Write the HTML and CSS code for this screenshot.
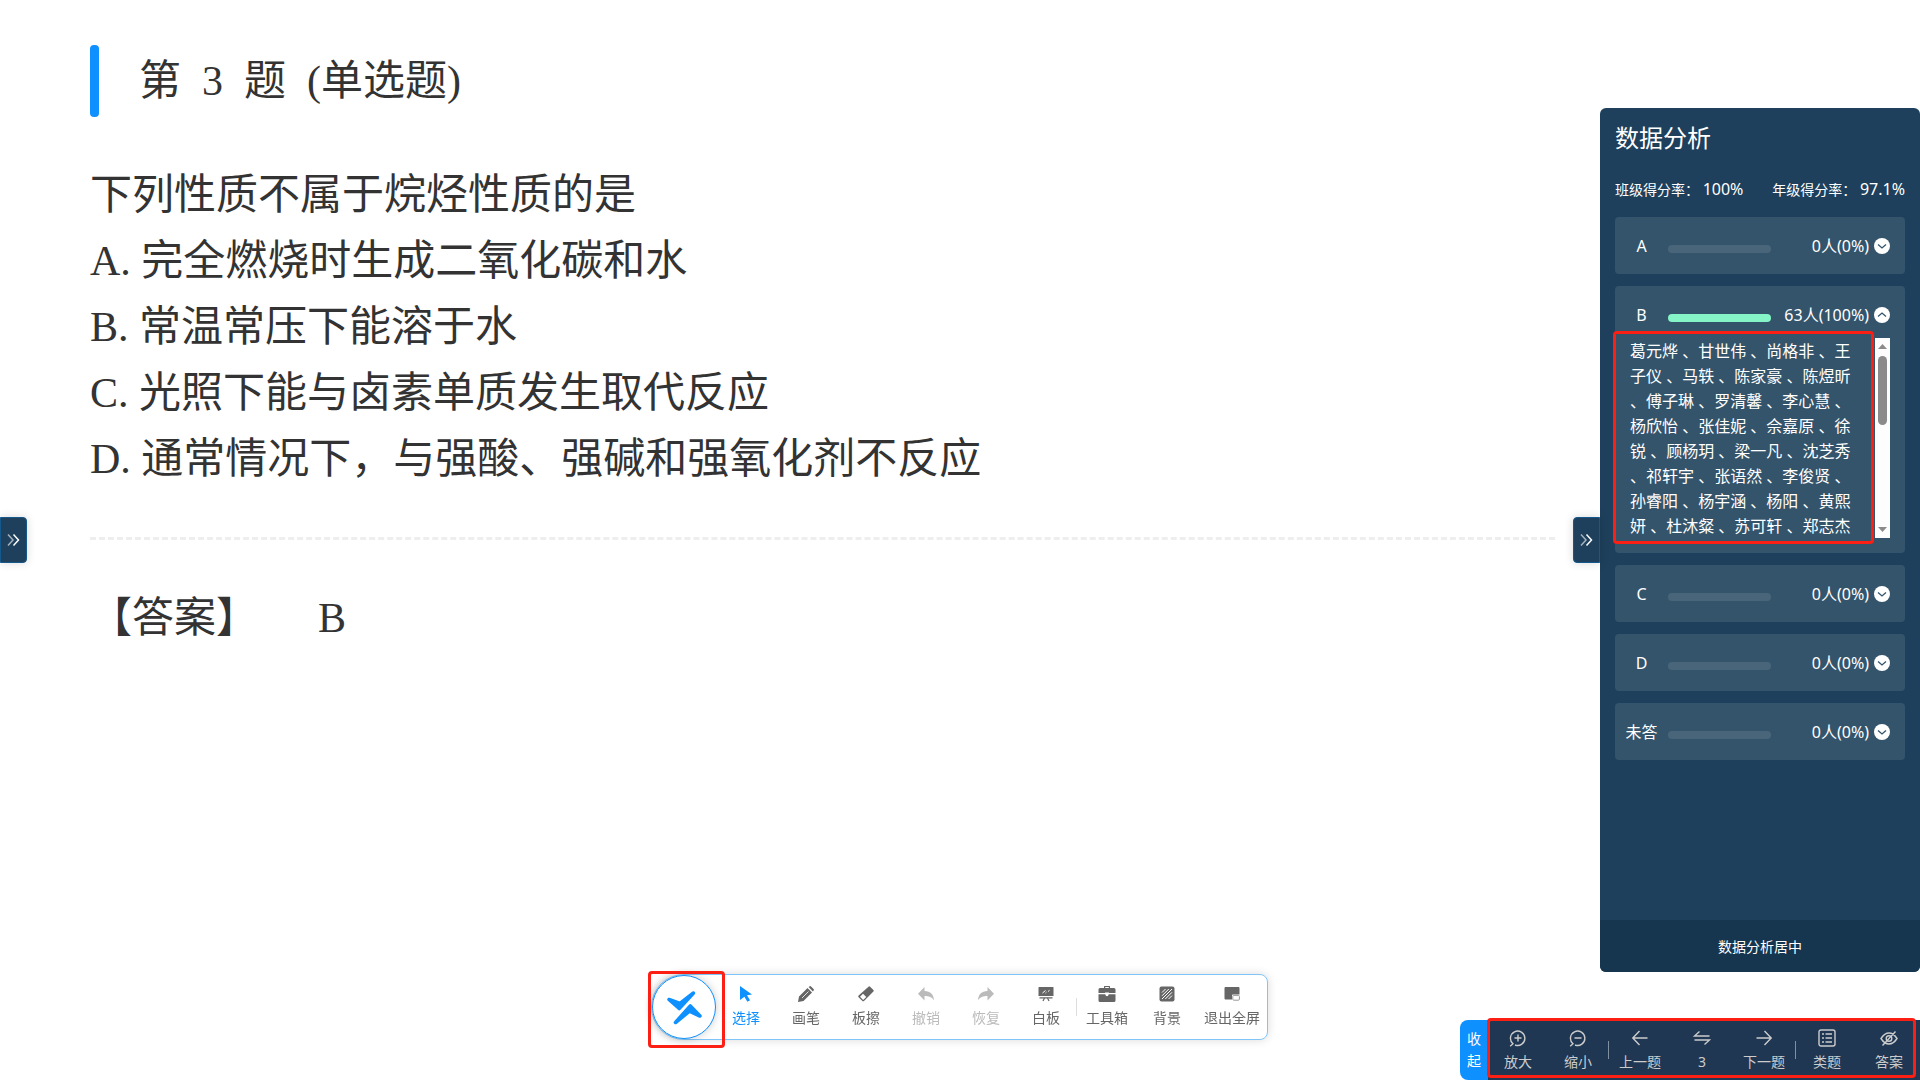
FILE: index.html
```html
<!DOCTYPE html>
<html lang="zh-CN">

<head>
    <meta charset="UTF-8">
    <meta name="viewport" content="width=device-width, initial-scale=1.0">
    <title>数据分析</title>
    <link rel="stylesheet" href="styles.css">
</head>

<body>
    <div class="page">
        <main class="question">
            <h1 class="title">第&nbsp; 3&nbsp; 题&nbsp; (单选题)</h1>
            <div class="stem">
                <p>下列性质不属于烷烃性质的是</p>
                <p>A. 完全燃烧时生成二氧化碳和水</p>
                <p>B. 常温常压下能溶于水</p>
                <p>C. 光照下能与卤素单质发生取代反应</p>
                <p>D. 通常情况下，与强酸、强碱和强氧化剂不反应</p>
            </div>
            <div class="answer">
                <span>【答案】</span>
                <span>B</span>
            </div>
        </main>

        <aside class="panel">
            <button class="toggle toggle-panel" aria-label="收起面板">
                <svg width="14" height="14" viewBox="0 0 14 14"><path class="dim" d="M2 1.500l5 5.500-5 5.500"/><path d="M7.500 1.500l5 5.500-5 5.500"/></svg>
            </button>
            <h2 class="panel-title">数据分析</h2>
            <div class="rates">
                <div>班级得分率： <b>100%</b></div>
                <div>年级得分率： <b>97.1%</b></div>
            </div>
            <div class="cards">
                <section class="card">
                    <div class="row">
                        <span class="name">A</span>
                        <span class="bar"></span>
                        <span class="count">0人(0%)</span>
                        <button class="fold" aria-label="展开"><svg width="16" height="16" viewBox="0 0 16 16"><circle cx="8" cy="8" r="8"/><path d="M4 6.500l4 3.500 4-3.500"/></svg></button>
                    </div>
                </section>
                <section class="card">
                    <div class="row">
                        <span class="name">B</span>
                        <span class="bar full"></span>
                        <span class="count">63人(100%)</span>
                        <button class="fold" aria-label="折叠"><svg width="16" height="16" viewBox="0 0 16 16"><circle cx="8" cy="8" r="8"/><path d="M4 9.500l4-3.500 4 3.500"/></svg></button>
                    </div>
                    <div class="detail">
                        <div class="students">
                            葛元烨 、甘世伟 、尚格非 、王<br>
                            子仪 、马轶 、陈家豪 、陈煜昕<br>
                            、傅子琳 、罗清馨 、李心慧 、<br>
                            杨欣怡 、张佳妮 、佘嘉原 、徐<br>
                            锐 、顾杨玥 、梁一凡 、沈芝秀<br>
                            、祁轩宇 、张语然 、李俊贤 、<br>
                            孙睿阳 、杨宇涵 、杨阳 、黄熙<br>
                            妍 、杜沐粲 、苏可轩 、郑志杰
                        </div>
                        <div class="scroll">
                            <svg width="9" height="5" viewBox="0 0 9 5"><path d="M0 5l4.500-5 4.500 5z"/></svg>
                            <div class="thumb"></div>
                            <svg width="9" height="5" viewBox="0 0 9 5"><path d="M0 0l4.500 5 4.500-5z"/></svg>
                        </div>
                        <div class="mark mark-students"></div>
                    </div>
                </section>
                <section class="card">
                    <div class="row">
                        <span class="name">C</span>
                        <span class="bar"></span>
                        <span class="count">0人(0%)</span>
                        <button class="fold" aria-label="展开"><svg width="16" height="16" viewBox="0 0 16 16"><circle cx="8" cy="8" r="8"/><path d="M4 6.500l4 3.500 4-3.500"/></svg></button>
                    </div>
                </section>
                <section class="card">
                    <div class="row">
                        <span class="name">D</span>
                        <span class="bar"></span>
                        <span class="count">0人(0%)</span>
                        <button class="fold" aria-label="展开"><svg width="16" height="16" viewBox="0 0 16 16"><circle cx="8" cy="8" r="8"/><path d="M4 6.500l4 3.500 4-3.500"/></svg></button>
                    </div>
                </section>
                <section class="card">
                    <div class="row">
                        <span class="name">未答</span>
                        <span class="bar"></span>
                        <span class="count">0人(0%)</span>
                        <button class="fold" aria-label="展开"><svg width="16" height="16" viewBox="0 0 16 16"><circle cx="8" cy="8" r="8"/><path d="M4 6.500l4 3.500 4-3.500"/></svg></button>
                    </div>
                </section>
            </div>
            <button class="center-btn">数据分析居中</button>
        </aside>
    </div>

    <button class="toggle toggle-left" aria-label="展开目录">
        <svg width="14" height="14" viewBox="0 0 14 14"><path class="dim" d="M2 1.500l5 5.500-5 5.500"/><path d="M7.500 1.500l5 5.500-5 5.500"/></svg>
    </button>

    <!-- drawing tools -->
    <nav class="tools">
        <button class="logo" aria-label="菜单">
            <svg width="36" height="36" viewBox="0 0 36 36">
                <path d="M3 10.500L13.200 19.500 27.500 4 14 14.500z"/>
                <path d="M34 27L24.300 17 9.500 33.500 23.500 22z"/>
            </svg>
        </button>
        <button class="tool active">
            <svg width="16" height="16" viewBox="0 0 16 16"><path d="M2 0l12 8.500-5 .8 3 5-2.600 1.500-3-5L2 14z"/></svg>
            选择
        </button>
        <button class="tool">
            <svg width="16" height="16" viewBox="0 0 16 16"><path d="M9.500 2l4.500 4.500L5.500 15 0 16l1-5.500zM10.600 1l.8-.6q.8-.7 1.600 0l2.600 2.600q.7.800 0 1.600l-.7.800z"/><path d="M4 12l6.500-6.500" stroke="#fff" stroke-width=".8"/></svg>
            画笔
        </button>
        <button class="tool">
            <svg width="16" height="16" viewBox="0 0 16 16"><path fill-rule="evenodd" d="M10.500.7q.8-.7 1.600 0l3.300 3.300q.7.800 0 1.600L6 14.900q-.8.700-1.600 0L.6 11.200q-.7-.8 0-1.600zM5 7.800l-3 3 3.100 3.100 3.200-3z"/></svg>
            板擦
        </button>
        <button class="tool" disabled>
            <svg width="16" height="16" viewBox="0 0 16 16"><path d="M6.500 1v4c6 0 9.200 3.500 9.500 9.500-2-3.500-5-4.500-9.500-4.500v4.500L0 7.800z"/></svg>
            撤销
        </button>
        <button class="tool" disabled>
            <svg width="16" height="16" viewBox="0 0 16 16"><path d="M9.500 1v4C3.500 5 .3 8.500 0 14.500c2-3.500 5-4.500 9.500-4.500v4.500L16 7.800z"/></svg>
            恢复
        </button>
        <button class="tool">
            <svg width="16" height="16" viewBox="0 0 16 16"><path d="M1 1h14q.5 0 .5.500v8.500H.5V1.500Q.5 1 1 1zM1.500 11.200h13v1.200h-13z"/><path d="M6.500 12l-1.500 3M9.500 12l1.500 3" stroke="#666" stroke-width="1.200"/><path d="M4.500 7l3-2.500M7.500 7l1-.9M10 5.500l1.500-1.200" stroke="#fff" stroke-width="1"/></svg>
            白板
        </button>
        <span class="line"></span>
        <button class="tool">
            <svg width="18" height="16" viewBox="0 0 18 16"><path fill-rule="evenodd" d="M6 2V.5Q6 0 6.500 0h5q.5 0 .5.500V2h4q1.500 0 1.500 1.500V7H11V6.500H7V7H.5V3.500Q.5 2 2 2zM7.200 1.100V2h3.600v-.9zM.5 8.200H7.300q.3 2 1.700 2t1.700-2h6.800V14.500q0 1.500-1.500 1.500H2q-1.500 0-1.500-1.500z"/></svg>
            工具箱
        </button>
        <button class="tool">
            <svg width="16" height="16" viewBox="0 0 16 16"><rect x=".5" y=".5" width="15" height="15" rx="2"/><path d="M3 6.500L6.500 3M3 9.800L9.800 3M3 13L13 3M6.300 13L13 6.300M9.600 13L13 9.600" stroke="#fff" stroke-width="1"/></svg>
            背景
        </button>
        <button class="tool wide">
            <svg width="16" height="16" viewBox="0 0 16 16"><path d="M1.500 1h13q1 0 1 1v6.500H9q-1 0-1 1v4H1.500q-1 0-1-1V2q0-1 1-1z"/><rect x="8.800" y="9.400" width="6.600" height="4.800" rx="1" fill="#fff" stroke="#999"/></svg>
            退出全屏
        </button>
        <div class="mark mark-logo"></div>
    </nav>

    <!-- question navigation -->
    <nav class="pager">
        <button class="collapse">收<br>起</button>
        <div class="pager-bar">
            <button class="step">
                <svg width="18" height="18" viewBox="0 0 18 18"><path d="M4 14.800a7.200 7.200 0 1 1 2 1.200M4.500 14.300L1.200 17.200M5.500 9h7M9 5.500v7"/></svg>
                放大
            </button>
            <button class="step">
                <svg width="18" height="18" viewBox="0 0 18 18"><path d="M4 14.800a7.200 7.200 0 1 1 2 1.200M4.500 14.300L1.200 17.200M5.500 9h7"/></svg>
                缩小
            </button>
            <span class="line"></span>
            <button class="step">
                <svg width="18" height="18" viewBox="0 0 18 18"><path d="M16.500 9h-14M8.500 2L1.800 9l6.700 7"/></svg>
                上一题
            </button>
            <button class="step">
                <svg width="18" height="18" viewBox="0 0 18 18"><path d="M6.500 2.500L1.500 7h15M11.500 15.500l5-4.500h-15"/></svg>
                3
            </button>
            <button class="step">
                <svg width="18" height="18" viewBox="0 0 18 18"><path d="M1.500 9h14M9.500 2l6.700 7-6.700 7"/></svg>
                下一题
            </button>
            <span class="line"></span>
            <button class="step">
                <svg width="18" height="18" viewBox="0 0 18 18"><rect x="1" y="1" width="16" height="16" rx="2"/><path d="M4 5h2M7.500 5H14M4 9h2M7.500 9H14M4 13h2M7.500 13H14"/></svg>
                类题
            </button>
            <button class="step">
                <svg width="18" height="18" viewBox="0 0 18 18"><path d="M1 9.500Q4.500 4 9 4t8 5.500Q13.500 15 9 15T1 9.500zM15.500 2.500L2.500 16.500"/><circle cx="9" cy="9.500" r="2.800"/></svg>
                答案
            </button>
        </div>
        <div class="mark mark-pager"></div>
    </nav>
</body>

</html>
```

FILE: styles.css
```css
* {
    box-sizing: border-box;
}
body {
    margin: 0;
    background-color: #fff;
    font-family: "Noto Sans", "Noto Sans CJK SC", sans-serif;
}
h1, h2, p {
    margin: 0;
    font-weight: normal;
}
button {
    border: none;
    padding: 0;
    background: none;
    font-family: inherit;
    color: inherit;
    cursor: pointer;
}
svg {
    display: block;
}
.page {
    display: flex;
    align-items: flex-start;
    min-height: 100vh;
}

/* question */
.question {
    flex: 1;
    padding: 45px 45px 0 90px;
    font-family: "Liberation Serif", "Noto Sans CJK SC", serif;
    font-size: 42px;
    line-height: 66px;
    color: #333;
}
.title {
    display: flex;
    align-items: center;
    gap: 40px;
    height: 72px;
    font-size: 42px;
}
.title::before {
    content: "";
    width: 9px;
    height: 72px;
    border-radius: 4px;
    background-color: #0e90ff;
}
.stem {
    padding: 45px 0;
    border-bottom: 3px dashed #eee;
}
.answer {
    display: flex;
    gap: 60px;
    padding-top: 45px;
}

/* analysis panel */
.panel {
    position: relative;
    display: flex;
    flex-direction: column;
    width: 320px;
    height: 80vh;
    margin-top: 10vh;
    border-radius: 6px;
    background-color: #1e405c;
    color: #fff;
}
.panel-title {
    padding: 12px 15px;
    font-size: 24px;
    line-height: 36px;
}
.rates {
    display: flex;
    justify-content: space-between;
    align-items: center;
    padding: 9px 15px 10px;
    font-size: 14px;
    line-height: 24px;
}
.rates b {
    font-size: 16px;
    font-weight: normal;
}
.cards {
    flex: 1;
    display: flex;
    flex-direction: column;
    gap: 12px;
    padding: 5px 15px;
}
.card {
    border-radius: 4px;
    background-color: #34546c;
}
.row {
    display: flex;
    align-items: center;
    height: 57px;
    padding-right: 15px;
    font-size: 16px;
    line-height: 24px;
}
.name {
    width: 53px;
    text-align: center;
}
.bar {
    width: 103px;
    height: 8px;
    margin-top: 6px;
    border-radius: 4px;
    background-color: #49657a;
}
.bar.full {
    background-color: #85f4c6;
}
.count {
    flex: 1;
    text-align: right;
}
.fold {
    margin-left: 5px;
}
.fold circle {
    fill: #fff;
}
.fold path {
    fill: none;
    stroke: #34546c;
    stroke-width: 1.3;
}
.detail {
    position: relative;
    display: flex;
    justify-content: space-between;
    height: 215px;
    margin-top: -5px;
    padding: 0 15px 15px;
}
.students {
    padding-top: 1px;
    font-size: 16px;
    line-height: 25px;
    white-space: nowrap;
}
.scroll {
    display: flex;
    flex-direction: column;
    align-items: center;
    width: 15px;
    padding: 6px 0;
    background-color: #fdfdfd;
}
.scroll path {
    fill: #8b8b8b;
}
.thumb {
    width: 9px;
    height: 69px;
    margin: 7px 0 auto;
    border-radius: 5px;
    background-color: #8b8b8b;
}
.center-btn {
    height: 52px;
    border-radius: 0 0 6px 6px;
    background-color: #16364f;
    font-size: 14px;
}

/* side toggles */
.toggle {
    position: absolute;
    display: flex;
    align-items: center;
    justify-content: center;
    width: 27px;
    height: 46px;
    padding-right: 2px;
    border: 1px solid #14588c;
    background-color: #1e405c;
    box-shadow: 0 0 10px rgba(0, 0, 0, 0.15);
}
.toggle path {
    fill: none;
    stroke: #fff;
    stroke-width: 1.5;
}
.toggle .dim {
    opacity: 0.6;
}
.toggle-left {
    left: 0;
    top: calc(50vh - 23px);
    border-radius: 0 4px 4px 0;
}
.toggle-panel {
    right: 100%;
    top: calc(50% - 23px);
    border-radius: 4px 0 0 4px;
}

/* drawing tools */
.tools {
    position: fixed;
    left: 651px;
    bottom: 40px;
    display: flex;
    align-items: center;
    height: 66px;
    border: 1px solid #80c5fa;
    border-radius: 33px 8px 8px 33px;
    background-color: #fff;
    box-shadow: 0 0 10px rgba(0, 0, 0, 0.15);
}
.logo {
    display: flex;
    align-items: center;
    justify-content: center;
    width: 64px;
    height: 64px;
    border: 1px solid #0e90ff;
    border-radius: 50%;
    background-color: #fff;
    box-shadow: 0 0 8px rgba(0, 0, 0, 0.2);
}
.logo path {
    fill: #0e90ff;
    stroke: #0e90ff;
    stroke-width: 3.6;
    stroke-linejoin: round;
}
.tool {
    display: flex;
    flex-direction: column;
    align-items: center;
    gap: 6px;
    width: 60px;
    font-size: 14px;
    line-height: 20px;
    color: #666;
    white-space: nowrap;
}
.tool svg {
    fill: currentColor;
}
.tool.active {
    color: #0e90ff;
}
.tool:disabled {
    color: #bbb;
}
.tool.wide {
    width: 70px;
}
.line {
    width: 1px;
    height: 18px;
    background-color: #ddd;
}

/* question navigation */
.pager {
    position: fixed;
    right: 0;
    bottom: 0;
    display: flex;
    height: 60px;
}
.collapse {
    width: 28px;
    border-radius: 8px 0 0 8px;
    background-color: #0e90ff;
    color: #fff;
    font-size: 14px;
    line-height: 22px;
}
.pager-bar {
    display: flex;
    align-items: center;
    background-color: #1f3753;
}
.pager .line {
    background-color: #8090a0;
}
.step {
    display: flex;
    flex-direction: column;
    align-items: center;
    gap: 5px;
    width: 62px;
    font-size: 14px;
    line-height: 20px;
    color: #ccc;
}
.step:nth-child(-n+2) {
    width: 60px;
}
.step svg {
    fill: none;
    stroke: currentColor;
    stroke-width: 1.4;
}

/* red highlight frames */
.mark {
    position: absolute;
    border: 3px solid #fb1f14;
    border-radius: 4px;
    pointer-events: none;
}
.mark-students {
    left: -2px;
    right: 31px;
    top: -7px;
    bottom: 9px;
}
.mark-logo {
    left: -4px;
    top: -4px;
    width: 77px;
    height: 77px;
}
.mark-pager {
    left: 27px;
    right: 4px;
    top: -2px;
    bottom: 2px;
}
```
